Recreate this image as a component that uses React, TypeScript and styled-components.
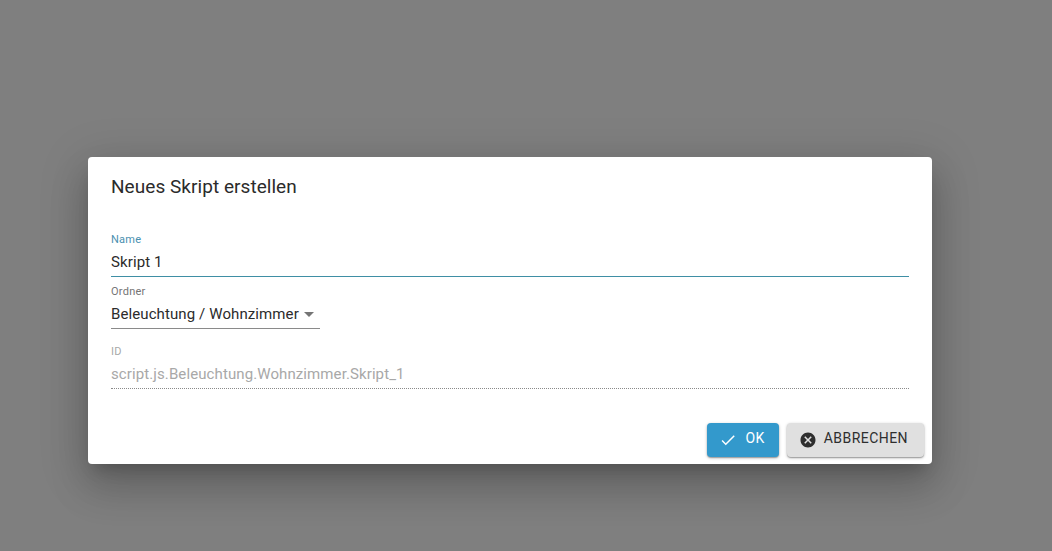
import React from "react";
import styled, { createGlobalStyle } from "styled-components";

const Global = createGlobalStyle`
  html, body { margin: 0; padding: 0; height: 100%; background: #7f7f7f; }
  body { font-family: Roboto, "Liberation Sans", sans-serif; overflow: hidden; }
`;

const Backdrop = styled.div`
  width: 1052px;
  height: 551px;
  background: #7f7f7f;
  padding: 157px 0 0 88px;
  box-sizing: border-box;
`;

const Dialog = styled.div`
  width: 844px;
  height: 307px;
  background: #fff;
  border-radius: 4px;
  box-shadow: 0 11px 15px -7px rgba(0,0,0,.2), 0 24px 38px 3px rgba(0,0,0,.14), 0 9px 46px 8px rgba(0,0,0,.12);
  display: flex;
  flex-direction: column;
  box-sizing: border-box;
`;

const Title = styled.h2`
  margin: 0;
  padding: 18px 23px 0;
  font-size: 19px;
  line-height: 24px;
  font-weight: 400;
  letter-spacing: .05px;
  color: #2b2b2b;
`;

const Content = styled.div`
  padding: 35px 23px 0;
  display: flex;
  flex-direction: column;
`;

const Field = styled.div<{ $h: number; $w?: number }>`
  height: ${(p) => p.$h}px;
  width: ${(p) => (p.$w ? `${p.$w}px` : "auto")};
`;

const Label = styled.div<{ $color: string }>`
  font-size: 11px;
  line-height: 12px;
  letter-spacing: .25px;
  color: ${(p) => p.$color};
`;

const Value = styled.div<{ $color: string; $line: string }>`
  display: flex;
  align-items: center;
  justify-content: space-between;
  font-size: 15px;
  line-height: 20px;
  height: 31px;
  padding-top: 2px;
  letter-spacing: .1px;
  box-sizing: border-box;
  color: ${(p) => p.$color};
  border-bottom: ${(p) => p.$line};
`;

const Caret = styled.span`
  width: 0;
  height: 0;
  border-left: 5px solid transparent;
  border-right: 5px solid transparent;
  border-top: 5px solid #757575;
  margin-right: 6px;
`;

const Actions = styled.div`
  margin-top: auto;
  display: flex;
  justify-content: flex-end;
  gap: 8px;
  padding: 0 8px 7px 0;
`;

const Button = styled.button<{ $primary?: boolean }>`
  height: 34px;
  border: 0;
  border-radius: 4px;
  display: flex;
  align-items: center;
  box-sizing: border-box;
  font-family: inherit;
  font-size: 14px;
  font-weight: 400;
  letter-spacing: .45px;
  text-transform: uppercase;
  padding: 0 ${(p) => (p.$primary ? 14 : 16)}px 5px 12px;
  gap: ${(p) => (p.$primary ? 8 : 7)}px;
  background: ${(p) => (p.$primary ? "#3399cc" : "#e0e0e0")};
  color: ${(p) => (p.$primary ? "#fff" : "#2e2e2e")};
  box-shadow: 0 1px 3px 0 rgba(0,0,0,.3), 0 1px 1px 0 rgba(0,0,0,.2);
`;

const Icon = styled.svg`
  width: 18px;
  height: 18px;
  margin-top: 5px;
  fill: currentColor;
`;

export default function App() {
  return (
    <>
      <Global />
      <Backdrop>
        <Dialog>
          <Title>Neues Skript erstellen</Title>
          <Content>
            <Field $h={52}>
              <Label $color="#4a90b0">Name</Label>
              <Value $color="#2b2b2b" $line="1px solid #3f8fa5">Skript 1</Value>
            </Field>
            <Field $h={60} $w={209}>
              <Label $color="#757575">Ordner</Label>
              <Value $color="#2b2b2b" $line="1px solid #8a8a8a">
                Beleuchtung / Wohnzimmer
                <Caret />
              </Value>
            </Field>
            <Field $h={50}>
              <Label $color="#a8a8a8">ID</Label>
              <Value $color="#a8a8a8" $line="1px dotted #8a8a8a">script.js.Beleuchtung.Wohnzimmer.Skript_1</Value>
            </Field>
          </Content>
          <Actions>
            <Button $primary>
              <Icon viewBox="0 0 24 24"><path d="M9 16.17 4.83 12l-1.42 1.41L9 19 21 7l-1.41-1.41z" /></Icon>
              OK
            </Button>
            <Button>
              <Icon viewBox="0 0 24 24"><path d="M12 2C6.47 2 2 6.47 2 12s4.47 10 10 10 10-4.47 10-10S17.53 2 12 2zm5 13.59L15.59 17 12 13.41 8.41 17 7 15.59 10.59 12 7 8.41 8.41 7 12 10.59 15.59 7 17 8.41 13.41 12 17 15.59z" /></Icon>
              Abbrechen
            </Button>
          </Actions>
        </Dialog>
      </Backdrop>
    </>
  );
}
